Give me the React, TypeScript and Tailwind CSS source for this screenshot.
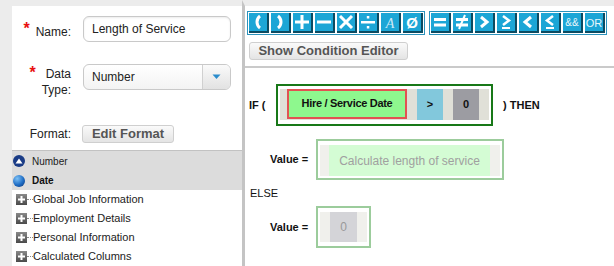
import React from 'react';

const font = "font-['Liberation_Sans',Arial,sans-serif]";

const Btn = ({ children }: { children: React.ReactNode }) => (
    <div className="w-[20px] h-[20px] bg-[#1ca6d6] border-r-2 border-b-2 border-[#0c4b62] flex items-center justify-center">
        <svg width="18" height="18" viewBox="0 0 18 18">{children}</svg>
    </div>
);

const Group = ({ children }: { children: React.ReactNode }) => (
    <div className="border border-[#2c93bd] bg-white p-[1px] flex gap-[2px]">{children}</div>
);

const TreeRow = ({ label }: { label: string }) => (
    <div className="h-[19px] flex items-center">
        <div className="ml-[4px] w-[11px] h-[11px] bg-gradient-to-b from-[#8a8a8a] to-[#4a4a4a] flex items-center justify-center">
            <svg width="9" height="9" viewBox="0 0 9 9">
                <rect x="1" y="3.5" width="7" height="2" fill="#fff" />
                <rect x="3.5" y="1" width="2" height="7" fill="#fff" />
            </svg>
        </div>
        <div className="w-[6px] border-t border-dotted border-[#888]"></div>
        <span className="text-[11px] text-[#222]">{label}</span>
    </div>
);

export default function App() {
    return (
        <div className={`${font} w-[614px] h-[266px] flex bg-[#ececec] overflow-hidden`}>
            {/* left side */}
            <div className="w-[242px] pl-[12px] pt-[6px] flex flex-col">
                <div className="h-[144px] bg-white pt-[10px]">
                    <div className="flex">
                        <div className="w-[59px] pt-[8px] flex justify-end items-start text-[12px] leading-[16px] text-[#222]">
                            <span className="text-[16px] leading-none font-bold text-[#e81010] -mt-[3px] mr-[6px]">*</span>
                            <span>Name:</span>
                        </div>
                        <div className="ml-[12px] w-[148px] h-[26px] border border-[#c9c9c9] rounded-[6px] shadow-[inset_0_1px_2px_rgba(0,0,0,0.08)] flex items-center pl-[8px] text-[12px] text-[#222]">
                            Length of Service
                        </div>
                    </div>
                    <div className="flex mt-[22px]">
                        <div className="w-[59px] pt-[2px] flex justify-end items-start text-[12px] leading-[16px] text-[#222]">
                            <span className="text-[16px] leading-none font-bold text-[#e81010] -mt-[1px] mr-[6px]">*</span>
                            <span className="text-right">Data<br />Type:</span>
                        </div>
                        <div className="ml-[12px] w-[148px] h-[26px] border border-[#c9c9c9] rounded-[6px] bg-gradient-to-b from-white to-[#f3f3f3] flex overflow-hidden">
                            <div className="flex-1 flex items-center pl-[8px] text-[12px] text-[#222]">Number</div>
                            <div className="w-[28px] border-l border-[#d0d0d0] bg-gradient-to-b from-[#fafafa] to-[#e2e2e2] flex items-center justify-center">
                                <svg width="9" height="6" viewBox="0 0 9 6"><path d="M0.5 0.5 L8.5 0.5 L4.5 5 Z" fill="#2a8ccc" /></svg>
                            </div>
                        </div>
                    </div>
                    <div className="flex items-center mt-[27px]">
                        <div className="w-[59px] text-right text-[12px] text-[#222]">Format:</div>
                        <div className="ml-[11px] w-[92px] h-[18px] border border-[#cfcfcf] rounded-[3px] bg-gradient-to-b from-[#fafafa] to-[#e4e4e4] flex items-center justify-center text-[13px] font-bold text-[#555]">
                            Edit Format
                        </div>
                    </div>
                </div>
                <div className="border-t border-[#c2c2c2] bg-[#dcdcdc]">
                    <div className="h-[20px] flex items-center">
                        <div className="ml-[1px] w-[12px] h-[12px] rounded-full bg-[#1a3c86] flex items-center justify-center">
                            <svg width="8" height="6" viewBox="0 0 8 6"><path d="M4 0.5 L7.5 5.5 L0.5 5.5 Z" fill="#fff" /></svg>
                        </div>
                        <span className="ml-[7px] text-[10px] text-[#222]">Number</span>
                    </div>
                    <div className="h-[19px] flex items-center">
                        <div className="ml-[1px] w-[12px] h-[12px] rounded-full bg-[radial-gradient(circle_at_35%_30%,#7cc0f5,#1d6cc4_55%,#0a2f6e)]"></div>
                        <span className="ml-[7px] text-[10px] font-bold text-[#111]">Date</span>
                    </div>
                </div>
                <div className="flex-1 bg-white">
                    <TreeRow label="Global Job Information" />
                    <TreeRow label="Employment Details" />
                    <TreeRow label="Personal Information" />
                    <TreeRow label="Calculated Columns" />
                </div>
            </div>

            {/* right side */}
            <div className="flex-1 border-l-[3px] border-[#c4c4c4] border-t-[6px] border-t-[#ececec] bg-white flex flex-col">
                <div className="pl-[2px] pt-[5px] flex gap-[4px]">
                    <Group>
                        <Btn><path d="M11 3 C7 6 7 12 11 15" stroke="#fff" strokeWidth="3" fill="none" /></Btn>
                        <Btn><path d="M7 3 C11 6 11 12 7 15" stroke="#fff" strokeWidth="3" fill="none" /></Btn>
                        <Btn>
                            <rect x="2" y="7.5" width="14" height="3" fill="#fff" />
                            <rect x="7.5" y="2" width="3" height="14" fill="#fff" />
                        </Btn>
                        <Btn><rect x="2" y="7.5" width="14" height="3" fill="#fff" /></Btn>
                        <Btn><path d="M3 3 L15 15 M15 3 L3 15" stroke="#fff" strokeWidth="3" /></Btn>
                        <Btn>
                            <rect x="2" y="8" width="14" height="2.5" fill="#fff" />
                            <rect x="7.8" y="3" width="2.5" height="2.5" fill="#fff" />
                            <rect x="7.8" y="13" width="2.5" height="2.5" fill="#fff" />
                        </Btn>
                        <Btn>
                            <text x="9" y="14.5" textAnchor="middle" fontSize="14" fontStyle="italic" fontFamily="Liberation Serif, serif" fill="#cfe9f7">A</text>
                        </Btn>
                        <Btn>
                            <text x="9" y="14.5" textAnchor="middle" fontSize="15" fontWeight="bold" fontFamily="Liberation Sans, sans-serif" fill="#fff">Ø</text>
                        </Btn>
                    </Group>
                    <Group>
                        <Btn>
                            <rect x="3" y="5" width="12" height="3" fill="#fff" />
                            <rect x="3" y="10.5" width="12" height="3" fill="#fff" />
                        </Btn>
                        <Btn>
                            <rect x="3" y="5" width="12" height="3" fill="#fff" />
                            <rect x="3" y="10.5" width="12" height="3" fill="#fff" />
                            <path d="M12 2 L6 16" stroke="#fff" strokeWidth="2" />
                        </Btn>
                        <Btn><path d="M6 4 L12 9 L6 14" stroke="#fff" strokeWidth="3" fill="none" /></Btn>
                        <Btn>
                            <path d="M6 3 L12 7.5 L6 12" stroke="#fff" strokeWidth="2.5" fill="none" />
                            <rect x="5" y="14" width="8" height="2" fill="#fff" />
                        </Btn>
                        <Btn><path d="M12 4 L6 9 L12 14" stroke="#fff" strokeWidth="3" fill="none" /></Btn>
                        <Btn>
                            <path d="M12 3 L6 7.5 L12 12" stroke="#fff" strokeWidth="2.5" fill="none" />
                            <rect x="5" y="14" width="8" height="2" fill="#fff" />
                        </Btn>
                        <Btn>
                            <text x="9" y="12.5" textAnchor="middle" fontSize="10" fontFamily="Liberation Sans, sans-serif" fill="#e8f6fc">&amp;&amp;</text>
                        </Btn>
                        <Btn>
                            <text x="9" y="13.5" textAnchor="middle" fontSize="11" fontFamily="Liberation Sans, sans-serif" fill="#e8f6fc">OR</text>
                        </Btn>
                    </Group>
                </div>
                <div className="ml-[4px] mt-[7px] w-[159px] h-[18px] border border-[#cfcfcf] rounded-[3px] bg-gradient-to-b from-[#fafafa] to-[#e4e4e4] flex items-center justify-center text-[13px] font-bold text-[#555]">
                    Show Condition Editor
                </div>
                <div className="mt-[6px] border-t-2 border-[#cacaca]"></div>

                <div className="mt-[16px] flex items-center">
                    <span className="pl-[4px] w-[31px] text-[11px] font-bold text-[#111]">IF (</span>
                    <div className="border-2 border-[#187818] pt-[3px] pb-[4px] px-[2px]">
                        <div className="w-[209px] h-[31px] bg-[#e0e0d8] flex items-center">
                            <div className="ml-[7px] -mt-[2px] w-[120px] h-[30px] border-2 border-[#e25252] bg-[#8ef88e] flex items-center justify-center text-[11px] tracking-[-0.3px] font-bold text-[#111]">
                                Hire / Service Date
                            </div>
                            <div className="ml-[10px] w-[26px] h-[31px] bg-[#82c8dc] flex items-center justify-center text-[11px] font-bold text-[#111]">&gt;</div>
                            <div className="ml-[10px] w-[26px] h-[31px] bg-[#9c9ca2] flex items-center justify-center text-[11px] font-bold text-[#111]">0</div>
                        </div>
                    </div>
                    <span className="ml-[10px] text-[11px] font-bold text-[#111]">) THEN</span>
                </div>

                <div className="mt-[13px] flex items-center">
                    <span className="pl-[25px] w-[71px] text-[11px] font-bold text-[#111]">Value =</span>
                    <div className="border-2 border-[#9ccc9c] pt-[4px] pb-[2px] px-[2px]">
                        <div className="w-[180px] h-[31px] bg-[#f0f0ec] flex">
                            <div className="ml-[9px] w-[161px] bg-[#d4fcd4] flex items-center justify-center text-[12px] text-[#a0a0a0]">
                                Calculate length of service
                            </div>
                        </div>
                    </div>
                </div>

                <div className="mt-[6px] pl-[5px] h-[14px] flex items-center text-[11px] text-[#111]">ELSE</div>

                <div className="mt-[6px] flex items-center">
                    <span className="pl-[25px] w-[71px] text-[11px] font-bold text-[#111]">Value =</span>
                    <div className="border-2 border-[#9ccc9c] py-[4px] px-[2px]">
                        <div className="w-[47px] h-[30px] bg-[#f0f0ec] flex">
                            <div className="ml-[10px] w-[27px] bg-[#d4d4d8] flex items-center justify-center text-[12px] text-[#999]">0</div>
                        </div>
                    </div>
                </div>
            </div>
        </div>
    );
}
